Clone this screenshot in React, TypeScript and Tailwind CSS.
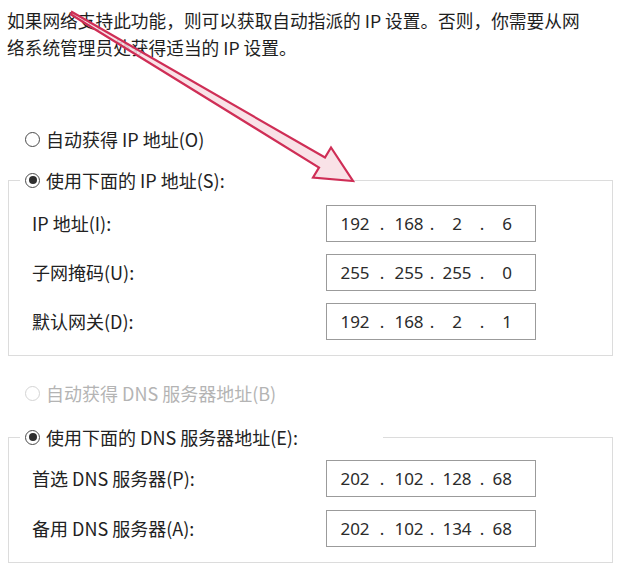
import React from "react";

const FONT = '"Noto Sans CJK SC", "Noto Sans", sans-serif';

function Radio({ checked, disabled }: { checked?: boolean; disabled?: boolean }) {
  return (
    <span
      className={
        "w-[15px] h-[15px] rounded-full border flex items-center justify-center shrink-0 bg-white " +
        (disabled ? "border-[#d4d4d4]" : "border-[#4a4a4a]")
      }
    >
      {checked ? <span className="w-[8px] h-[8px] rounded-full bg-[#2e2e2e]" /> : null}
    </span>
  );
}

function IpBox({ parts }: { parts: [string, string, string, string] }) {
  return (
    <div
      className="w-[210px] h-[37px] border border-[#9b9b9b] bg-white flex items-center pl-[13px] text-[17px] text-[#2b2b2b] shrink-0"
      style={{ fontFamily: '"Noto Sans", sans-serif' }}
    >
      <span className="w-[30px] text-center">{parts[0]}</span>
      <span className="w-[24px] text-center">.</span>
      <span className="w-[30px] text-center">{parts[1]}</span>
      <span className="w-[16px] text-center">.</span>
      <span className="w-[34px] text-center">{parts[2]}</span>
      <span className="w-[16px] text-center">.</span>
      <span className="w-[22px] text-right">{parts[3]}</span>
    </div>
  );
}

function Row({ label, parts }: { label: string; parts: [string, string, string, string] }) {
  return (
    <div className="flex items-center h-[37px]">
      <span className="w-[317px] shrink-0 pl-[23px] text-[18px] text-[#222]">{label}</span>
      <IpBox parts={parts} />
    </div>
  );
}

function Group({
  legend,
  legendWidth,
  rows,
  pt,
  gap,
}: {
  legend: string;
  legendWidth: string;
  rows: { label: string; parts: [string, string, string, string] }[];
  pt: string;
  gap: string;
}) {
  return (
    <div className="w-[605px] ml-[8px]">
      <div className="flex h-[26px]">
        <div className="w-[12px] h-[13px] self-end border-t border-l border-[#dcdcdc]" />
        <div className={"flex items-center gap-[6px] pl-[5px] " + legendWidth}>
          <Radio checked />
          <span className="text-[18px] text-[#222] whitespace-nowrap">{legend}</span>
        </div>
        <div className="flex-1 h-[13px] self-end border-t border-r border-[#dcdcdc]" />
      </div>
      <div className={"border-l border-r border-b border-[#dcdcdc] pb-[15px] flex flex-col " + pt + " " + gap}>
        {rows.map((r) => (
          <Row key={r.label} label={r.label} parts={r.parts} />
        ))}
      </div>
    </div>
  );
}

export default function App() {
  return (
    <div className="relative w-[620px] h-[577px] bg-white overflow-hidden" style={{ fontFamily: FONT }}>
      <p className="pl-[7px] pt-[7px] text-[17.7px] leading-[27px] text-[#1e1e1e] whitespace-nowrap">
        如果网络支持此功能，则可以获取自动指派的 IP 设置。否则，你需要从网
        <br />
        络系统管理员处获得适当的 IP 设置。
      </p>

      <div className="mt-[65px] h-[26px] flex items-center gap-[6px] pl-[25px]">
        <Radio />
        <span className="text-[18px] text-[#222]">自动获得 IP 地址(O)</span>
      </div>

      <div className="mt-[15px]">
        <Group
          legend="使用下面的 IP 地址(S):"
          legendWidth="w-[333px]"
          pt="pt-[12px]"
          gap="gap-[12px]"
          rows={[
            { label: "IP 地址(I):", parts: ["192", "168", "2", "6"] },
            { label: "子网掩码(U):", parts: ["255", "255", "255", "0"] },
            { label: "默认网关(D):", parts: ["192", "168", "2", "1"] },
          ]}
        />
      </div>

      <div className="mt-[24px] h-[26px] flex items-center gap-[6px] pl-[25px]">
        <Radio disabled />
        <span className="text-[18px] text-[#b4b4b4]">自动获得 DNS 服务器地址(B)</span>
      </div>

      <div className="mt-[18px]">
        <Group
          legend="使用下面的 DNS 服务器地址(E):"
          legendWidth="w-[363px]"
          pt="pt-[10px]"
          gap="gap-[13px]"
          rows={[
            { label: "首选 DNS 服务器(P):", parts: ["202", "102", "128", "68"] },
            { label: "备用 DNS 服务器(A):", parts: ["202", "102", "134", "68"] },
          ]}
        />
      </div>

      <svg className="absolute inset-0 pointer-events-none" width="620" height="577" viewBox="0 0 620 577">
        <polygon
          points="72,12 325,157.5 331,147.5 353,181 313,177.5 319,167.5 71,14.5"
          fill="#f8dde3"
          fillOpacity="0.85"
          stroke="#cf2e56"
          strokeWidth="2.2"
          strokeLinejoin="miter"
        />
      </svg>
    </div>
  );
}
